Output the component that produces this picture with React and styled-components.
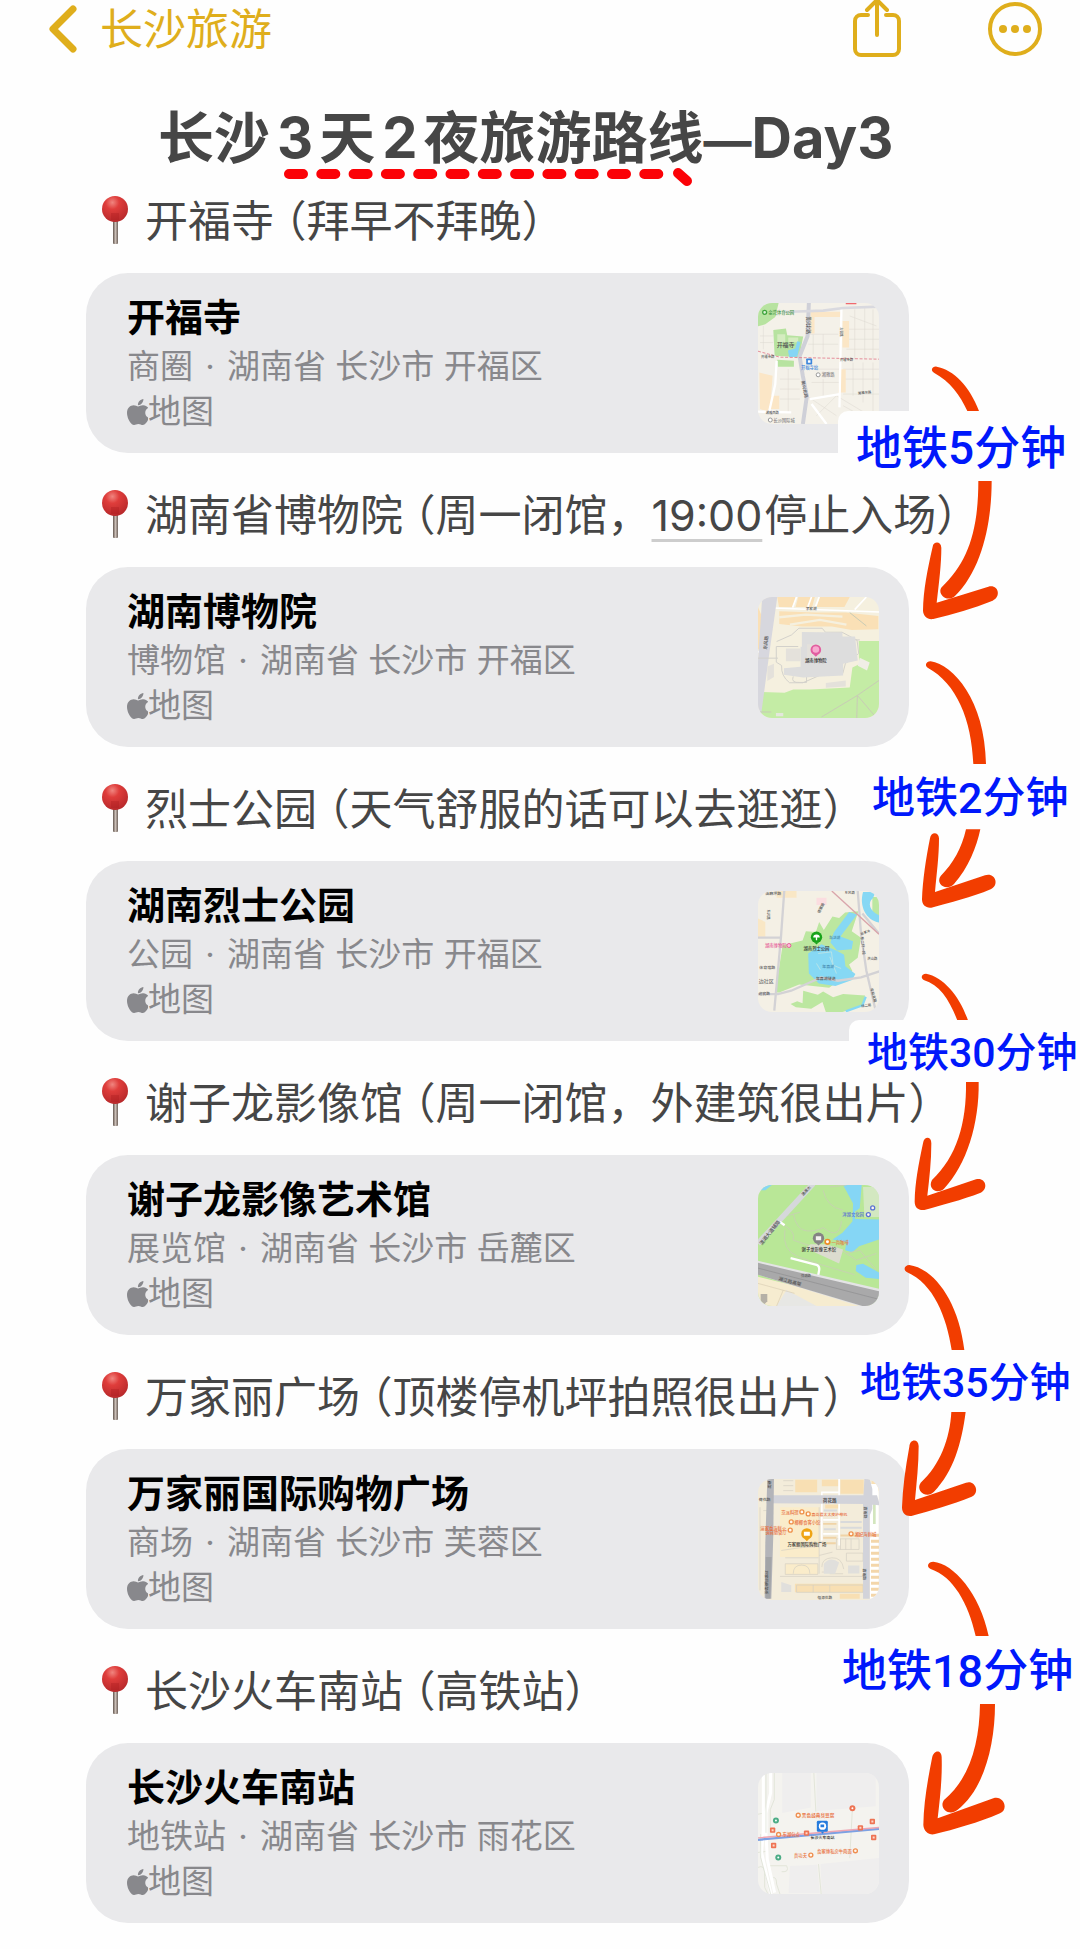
import React from "react";
import styled, { createGlobalStyle } from "styled-components";
import { FaApple } from "react-icons/fa";

const cjk = `"Noto Sans CJK SC", sans-serif`;
const accent = "#dfae1c";

const GlobalStyle = createGlobalStyle`
  *, *::before, *::after { box-sizing: border-box; }
  body { margin: 0; background: #fefefe; font-family: Inter, ${cjk}; color: #464646; overflow-x: hidden; }
  h1, h2, h3, p { margin: 0; font-weight: 400; }
  svg { display: block; flex: none; }
`;

const Page = styled.main`
  padding-bottom: 26px;
`;

const TopBar = styled.header`
  display: flex;
  align-items: center;
  height: 57px;
  padding: 0 37px 0 48px;
`;

const BarButton = styled.button`
  display: flex;
  align-items: center;
  gap: 22px;
  padding: 0;
  border: 0;
  background: none;
  color: ${accent};
  font: 400 43px/56px Inter, ${cjk};
  cursor: pointer;
`;

const Actions = styled.div`
  display: flex;
  align-items: center;
  gap: 86px;
  margin-left: auto;
`;

const TitleRow = styled.div`
  display: flex;
  padding: 41px 158px 13px;
`;

const Title = styled.h1`
  position: relative;
  font: 700 56px/80px Inter, ${cjk};
  white-space: nowrap;
`;

const Digit = styled.span`
  margin: 0 6px 0 7px;
`;

const Dash = styled.span`
  font-size: 48px;
  line-height: 1;
`;

const Underline = styled.svg`
  position: absolute;
  left: 121px;
  top: 67px;
`;

const Stops = styled.ol`
  display: flex;
  flex-direction: column;
  gap: 32px;
  margin: 0;
  padding: 0 171px 0 86px;
  list-style: none;
`;

const Stop = styled.li`
  display: flex;
  flex-direction: column;
  gap: 22px;
`;

const StopHeading = styled.h2`
  display: flex;
  align-items: center;
  gap: 16px;
  padding-left: 15px;
  font: 400 43px/60px Inter, ${cjk};
  white-space: nowrap;
`;

const OpenParen = styled.span`
  margin-left: 11px;
  font-feature-settings: "halt";
`;

const TimeLink = styled.a`
  padding: 0 2px 0 1px;
  color: inherit;
  text-decoration: underline #cdcdcd 3px;
  text-underline-offset: 8px;
`;

const CardWrap = styled.div`
  position: relative;
`;

const Card = styled.a`
  display: flex;
  align-items: center;
  justify-content: space-between;
  min-height: 180px;
  padding: 0 30px 0 41px;
  border-radius: 42px;
  background: #e9e9eb;
  color: #88888c;
  text-decoration: none;
`;

const CardTitle = styled.h3`
  margin-bottom: 6px;
  font: 700 38px/46px ${cjk};
  color: #000;
`;

const CardLine = styled.p`
  display: flex;
  align-items: center;
  font: 400 33px/45px Inter, ${cjk};
  white-space: pre;
`;

const Separator = styled.span`
  margin: 0 3px;
`;

const AppleMark = styled(FaApple)`
  width: 21px;
  height: 26px;
`;

const Thumb = styled.svg`
  width: 121px;
  height: 121px;
  border-radius: 14px;
`;

const Transit = styled.div`
  position: absolute;
  z-index: 1;
  right: -171px;
  top: ${(p) => p.$top}px;
  width: ${(p) => p.$width}px;
  pointer-events: none;
`;

const TransitLabel = styled.span`
  position: absolute;
  left: ${(p) => p.$left}px;
  top: ${(p) => p.$top}px;
  right: 0;
  height: ${(p) => p.$height}px;
  padding: 2px 0 0 18px;
  border-radius: 10px;
  background: #fefefe;
  color: #0018fb;
  font: 500 ${(p) => p.$size}px/${(p) => p.$height}px Roboto, ${cjk};
  white-space: nowrap;
`;

const BackIcon = () => (
  <svg width="30" height="50" viewBox="0 0 30 50" fill="none" stroke="currentColor" strokeWidth="7" strokeLinecap="round" strokeLinejoin="round" aria-hidden="true">
    <path d="M25 5 5 25l20 20" />
  </svg>
);

const ShareIcon = () => (
  <svg width="48" height="57" viewBox="0 0 48 57" fill="none" stroke="currentColor" strokeWidth="4" strokeLinecap="round" strokeLinejoin="round" aria-hidden="true">
    <path d="M15 15H8a6 6 0 0 0-6 6v28a6 6 0 0 0 6 6h32a6 6 0 0 0 6-6V21a6 6 0 0 0-6-6h-7M24 35V1M14 10 24 0l10 10" />
  </svg>
);

const MoreIcon = () => (
  <svg width="56" height="57" viewBox="0 0 56 57" aria-hidden="true">
    <circle cx="28" cy="29" r="25" fill="none" stroke="currentColor" strokeWidth="4" />
    <g fill="currentColor"><circle cx="16" cy="29" r="4" /><circle cx="28" cy="29" r="4" /><circle cx="40" cy="29" r="4" /></g>
  </svg>
);

const Pin = ({ id }) => (
  <svg width="28" height="52" viewBox="0 0 28 52" aria-hidden="true">
    <defs>
      <radialGradient id={"ball" + id} cx=".4" cy=".25" r=".75">
        <stop offset="0" stopColor="#f0857f" /><stop offset=".35" stopColor="#df3d3b" /><stop offset="1" stopColor="#b8292b" />
      </radialGradient>
      <linearGradient id={"rod" + id}>
        <stop offset="0" stopColor="#62564f" /><stop offset=".5" stopColor="#c9bdb5" /><stop offset="1" stopColor="#6e625c" />
      </linearGradient>
    </defs>
    <rect x="12" y="24" width="5" height="25" rx="1" fill={`url(#rod${id})`} />
    <circle cx="14" cy="14" r="13" fill={`url(#ball${id})`} />
    <path d="M10 18h8v7h-8z" fill="#a5181c" opacity=".3" />
  </svg>
);

const T = ({ x, y, s = 13, c = "#555", r = 0, a = "middle", w = 500, children }) => (
  <text x={x} y={y} fontSize={s} fill={c} textAnchor={a} fontWeight={w} fontFamily="Noto Sans CJK SC, sans-serif" transform={r ? `rotate(${r} ${x} ${y})` : undefined}>{children}</text>
);

const Dots = ({ items, r = 6 }) => items.map(([x, y, c]) => (
  <g key={x + "-" + y}><circle cx={x} cy={y} r={r} fill="#fff8ee" stroke={c} strokeWidth="4" /></g>
));

const TempleMap = () => (
  <Thumb viewBox="54 71 364 364" aria-hidden="true">
    <path fill="#f4f1e9" d="M54 71h364v364H54z" />
    <path stroke="#dcd9d1" strokeWidth="1.5" fill="none" d="M330 110l80 30M320 150h98M325 180h93M320 210h98M345 90v150M375 80v160M400 90v150M310 270h108M310 300h108M310 345h108M340 250v100M370 250v120M400 250v160M60 170h40M60 190h40M70 140v70M205 165h90M205 195h90M250 165v60M220 165v60M200 350l90 60M120 300h60M120 330h60M120 360h60M145 270v130M220 270h80M215 310h85M250 300v50M230 410l60-60 100 60M310 380l90 50" />
    <path fill="#fbe6c6" d="M212 97h92v16h-92zM308 125h20v80h-20zM300 270h18v70h-22zM58 280l40 10-8 110-30-10zM90 350h28v40H88zM212 113h12v50h-12z" />
    <path fill="#b7e3a0" d="M54 71h62l-10 42-30 22-22 6zM100 152l38-4 4 20 48 4-12 62-74-4zM112 242l50 3v18h-48z" />
    <path fill="#d5ecc0" d="M112 165h24v24h-24zM145 175h30v14h-30z" />
    <path fill="#86d5f5" d="M172 186l10 2-10 44-24 2-4-20 22-6z" />
    <path stroke="#fff" strokeWidth="7" fill="none" d="M110 245l-4 70-20 90M305 85l-6 300M54 398l100 2M215 375l45 60M210 360l90-15" />
    <path stroke="#cfd0d8" strokeWidth="12" fill="none" d="M207 71l-4 100-24 60 10 60 12 60-12 84" />
    <path stroke="#d9d9df" strokeWidth="8" fill="none" d="M130 98l120-4 60-8 108-4" />
    <path stroke="#e2798b" strokeWidth="2.5" strokeDasharray="9 5" fill="none" d="M54 216l66 18 298 6" />
    <path fill="#f0696e" d="M318 71h32v4h-32z" />
    <circle cx="74" cy="99" r="6" fill="#dff2d8" stroke="#3ea43b" strokeWidth="4" />
    <T x={85} y={104} a="start" c="#459446">金湾体育公园</T>
    <T x={137} y={204} s={18}>开福寺</T>
    <rect x="199" y="238" width="18" height="18" rx="2" fill="#3c86db" /><path d="M204 243h8v8h-8z" fill="#fff" />
    <T x={209} y={270} c="#3c86db">开福寺站</T>
    <T x={83} y={237} s={10}>开福寺路</T><T x={320} y={247} s={10}>开福寺路</T>
    <T x={202} y={112} s={13} r={90} a="start">黄兴北路</T><T x={184} y={306} s={13} r={78} a="start">黄兴北路</T>
    <T x={300} y={145} s={9} r={90} a="start">左湖路</T>
    <circle cx="235" cy="287" r="6" fill="#fff" stroke="#999" strokeWidth="3" /><T x={265} y={292} c="#888">湘雅路</T>
    <T x={375} y={344} s={10} r={-6}>湘雅东路</T><T x={97} y={404} s={10}>湘雅西路</T>
    <circle cx="91" cy="423" r="6" fill="#fff" stroke="#999" strokeWidth="3" /><T x={132} y={428} c="#888">长沙国际城</T>
  </Thumb>
);

const MuseumMap = () => (
  <Thumb viewBox="54 51 364 364" aria-hidden="true">
    <path fill="#f5f0df" d="M54 51h364v364H54z" />
    <path fill="#fae0b6" d="M112 51h55l-8 30h-42zM175 51h50l-8 30h-50zM240 51h90l-16 30h-84zM118 94l110 4 90 0 98 10v40l-80 2-60-10-90 0-68-8zM54 80l24 60-8 60-16 10z" />
    <path fill="none" stroke="#f5f0df" strokeWidth="7" d="M118 112l80-8 110 6M150 134l90-14 80 14" />
    <path fill="none" stroke="#fff" strokeWidth="5" d="M100 84l318 12M170 51l-12 32M215 51l-12 32M238 51l-12 32M380 51l-35 38M54 216l20 0" />
    <path fill="#c4eca5" d="M357 183h61v232H60l4-78 70 2 26-10 50 0 120-6 8-60 20-10z" />
    <path fill="#d7d7de" d="M66 60l10-9h36l-24 170-26 194h-8V245z" />
    <path fill="none" stroke="#d3d1cb" strokeWidth="3" d="M110 185l45-20 22-20h70l10 12 50 0 45 24 5 40-40 30-8 30-70 6-50 22h-40q-26-20-24-52l-16-10V200h66M160 290q-8 20 20 18h20v-20M300 180l60 0M54 235h60" />
    <path fill="#dddddd" d="M186 156l122 2v12h38l8 72-44 10v35l-120 6-58-8v-20l50-4v-60h4z" />
    <path fill="#e4e1db" d="M138 206h44v38h-44zM202 193h40v45h-40zM82 260l20-8v40l-20 12zM258 310l60-8v18l-60 4z" />
    <path fill="#f0eee6" d="M360 234l30 14-8 24-28-14z" />
    <path fill="none" stroke="#c8cbb6" strokeWidth="3" d="M245 412l108-65 65-45M353 347l-2 68M353 347l55 65M330 98l50 40M54 397h40" />
    <circle cx="228" cy="210" r="16" fill="#e25ea0" /><path d="M221 224l7 7 7-7z" fill="#e25ea0" /><circle cx="228" cy="209" r="10" fill="#f8a9cf" />
    <T x={228} y={248} s={13} c="#222">湖南博物院</T><T x={214} y={91} s={11}>李家湖</T><T x={80} y={210} s={14} r={-83} a="start">东风路</T>
    <path fill="#e4e7dc" d="M108 400h22v10h-22z" />
  </Thumb>
);

const ParkMap = () => (
  <Thumb viewBox="54 92 364 364" aria-hidden="true">
    <path fill="#f4f0e5" d="M54 92h364v364H54z" />
    <path fill="#fbe2b8" d="M54 175l22 10v45H54zM110 92h60v20h-60z" opacity=".7" />
    <path fill="#fbdde0" d="M230 112h30v22h-30z" />
    <path fill="#bce7a0" d="M128 255l60-14 10-28 30 2 10-30 14 24 26-40 20 4 18-16 40-4-20 60 28 20-10 60-26 20 10 20-70 50-90-10-60 24h-12zM190 392l44 12 16-10 30 18 30-10 66 4-8 32-60 18h-50l-10-30-34 20-46-4-16-10 20-8 16 6zM398 110l20 0v60l-20-10z" />
    <path fill="#86d8f4" d="M370 95h38l-8 18c-18 14-10 40 18 52v22c-40-8-60-50-48-92zM328 155l24 8-50 66 38 14-4 24-44 4-20-24 10-30zM205 280l40-28 46 20 22 12 4 34 30 24-10 18-50 18-50-8-30-30z" />
    <path fill="none" stroke="#86d8f4" strokeWidth="7" d="M378 410l-10 26-50 18" />
    <path fill="none" stroke="#d3d2d5" strokeWidth="7" d="M133 92l-10 140-20 220M54 232h70M54 402h60l40-10 90-40 50 10 70-10 60-20M354 92l10 130 16 110 28 120M418 220l-50-60" />
    <path fill="none" stroke="#d9a5ab" strokeWidth="4" d="M276 92l142 130" />
    <path fill="none" stroke="#b7e3e8" strokeWidth="3" d="M235 280l40-5 5 40 24 10M230 310l12 20M270 290l20 50" />
    <circle cx="230" cy="231" r="17" fill="#18a31b" /><path d="M223 246l7 7 7-7z" fill="#18a31b" /><path d="M220 232a10 9 0 0 1 20 0h-8v8h-4v-8z" fill="#fff" />
    <T x={230} y={270} c="#333">湖南烈士公园</T>
    <T x={75} y={262} a="start" c="#e65c98">湖南博物院</T><circle cx="147" cy="256" r="6" fill="#fbd" stroke="#e65c98" strokeWidth="3" />
    <T x={100} y={105} s={12}>油麻坪路</T><T x={330} y={101} s={10}>东风路</T><T x={80} y={148} s={10} r={90} a="start">东风路</T><T x={240} y={160} s={11} r={-65} a="start">德雅路</T>
    <T x={82} y={328} s={12}>体育馆路</T><T x={79} y={370} s={15} c="#777">边社区</T><T x={73} y={406} s={11}>迎宾路</T>
    <T x={363} y={230} s={11} r={84} a="start">东二环一段</T><T x={392} y={385} s={11} r={75} a="start">车站北路</T><T x={258} y={361} s={12}>年嘉湖隧道</T><T x={265} y={323} s={12} c="#478cb0">年嘉湖</T><T x={285} y={235} s={11} c="#478cb0">跃进湖</T><T x={398} y={299} s={10}>洪山路</T><T x={378} y={220} s={10} r={-20}>丝茅冲</T><T x={380} y={440} s={10} r={-10}>纬二路</T>
  </Thumb>
);

const ArtMap = () => (
  <Thumb viewBox="114 74 364 364" aria-hidden="true">
    <path fill="#b9e797" d="M114 74h364v364H114z" />
    <path fill="#85d6f5" d="M370 74h56l-6 70-14 10 0 22 72 2v60l-60 20-20 18-22-6 4-24-42-8 30-20 30-34 2-54zM122 90l14-16h20l-20 16zM410 315l20-4 48 26v20l-40-4-30-20z" />
    <path fill="#e4e9de" d="M430 80h48v90h-44z" opacity=".6" />
    <path fill="none" stroke="#c6d3b0" strokeWidth="3" d="M180 190q50 20 40 50l60 20M220 160q10 50 40 52t50-10q50 40 55-20 M310 90q10 50 60 60M195 210q-10 60 40 80l70 24 100 30M350 260l60 40 60-20M190 170l50-14M330 80l50-6M380 280l40-10 50 60" />
    <path fill="none" stroke="#d6d8db" strokeWidth="17" d="M114 250L280 70" />
    <path fill="none" stroke="#fff" strokeWidth="7" d="M180 185l14 10M212 294l78 20q10 4 8 16l-4 22" />
    <path fill="#dcdccf" d="M272 252h46l52 16-12 42-100-46z" />
    <path fill="#f6ecd0" d="M114 350l364 88H114z" /><path fill="#e7e7e4" d="M200 390l90 48H170z" /><path fill="#b5b0a6" d="M122 402h20v22l-10 10-10-6z" /><path stroke="#dacdb3" strokeWidth="2" fill="none" d="M114 370l110 30M190 390l-20 48" />
    <path fill="#e4e4e5" d="M114 302l364 84v52h-60L114 344z" />
    <path fill="#a9a9aa" d="M114 308l364 86v44h-50L114 344z" /><path stroke="#8e8e90" strokeWidth="2" fill="none" d="M114 324l364 94" />
    <circle cx="296" cy="234" r="17" fill="#858384" /><path d="M289 249l7 7 7-7z" fill="#858384" /><path d="M288 228h16v12h-16z" fill="#f4f1ef" />
    <T x={297} y={272} c="#333">谢子龙影像艺术馆</T>
    <circle cx="323" cy="245" r="7" fill="#fff" stroke="#ef8d28" strokeWidth="5" /><T x={335} y={251} a="start" c="#e3763d">一尚咖啡</T>
    <T x={400} y={167} c="#5b73d3">洋湖文化园</T><Dots items={[[446, 163, "#5b73d3"], [459, 143, "#5b73d3"]]} />
    <T x={126} y={256} s={15} r={-52} a="start">潇湘大道辅路</T><T x={250} y={108} s={12} r={-48} a="start">潇湘大</T><T x={175} y={360} s={14} r={15} a="start">湘江路高架</T><T x={258} y={350} s={10}>洋湖路</T>
  </Thumb>
);

const MallMap = () => (
  <Thumb viewBox="114 115 364 364" aria-hidden="true">
    <path fill="#f3ecda" d="M114 115h364v364H114z" />
    <path fill="#f8dfb3" d="M226 117h66v38h-66zM306 117h50v20h-50zM362 117h70v42h-70zM456 120h22v30h-22zM225 430h205v26H225zM360 460h60v15h-60zM316 192h40v12h-40z" />
    <path fill="#faecca" d="M180 200h118v150H180zM196 370h98v32h-98z" />
    <g stroke="#d3cfc2" strokeWidth="2" fill="none"><path d="M190 120h30M190 135h30M190 150h30M184 330l54-8 60-4M196 352h100M196 370h98v32h-98zM220 400q0-26 25-26t25 26M298 200v200M350 295h68v32h-68zM362 295v32M378 295v32M394 295v32M380 338h50v24h-50zM298 345l40-10M230 434h200v22H230zM280 434v22M330 434v22M180 408h250M120 200v250M130 210h20" /><path d="M306 380q0-26 30-28t36 34M306 395h20M330 400h40" /></g>
    <path fill="#e0dfdc" d="M312 370q20-24 46-4l-12 34h-34zM385 375h34v24h-34zM184 425l30 10v20h-30z" />
    <path stroke="#fff" strokeWidth="5" fill="none" d="M306 155V300M358 115v200M310 238h50M310 280h50M304 155h55" />
    <path stroke="#f0d3a6" strokeWidth="6" fill="none" d="M310 250h40M310 292h40M310 308h38M362 285h60" /><path stroke="#d9dadb" strokeWidth="6" fill="none" d="M362 244h64M362 262h64M312 210h40M312 266h36" />
    <path stroke="#fff" strokeWidth="26" fill="none" d="M464 130v345" /><path stroke="#f3d6aa" strokeWidth="24" strokeDasharray="9 9" fill="none" d="M466 280v195" /><path stroke="#d3e6bd" strokeWidth="8" fill="none" d="M464 190v60" />
    <path fill="#d2d3da" d="M150 164h322l6 20v10l-40-4-300-2zM434 115h16l8 30v60l-8 20v250h-20V190z" />
    <path fill="#b3b4b9" d="M142 115h20l-2 170-6 190h-20l2-170z" /><path fill="#8f9093" d="M137 350h18l-4 125h-14z" opacity=".45" />
    <T x={330} y={185} s={14} w={700}>荷花路</T><T x={134} y={181} s={12}>荷花路</T>
    <T x={210} y={219} c="#e76f3d">京派料理</T><T x={275} y={226} s={12} a="start" c="#e76f3d">嘉尚君太太皮护神机</T><T x={224} y={249} a="start" c="#e76f3d">椰椰食客小馆</T><T x={160} y={267} c="#e76f3d">渝家香海鲜火</T><T x={168} y={281} c="#e76f3d">锅自助餐厅</T><T x={405} y={285} a="start" c="#e76f3d">湘妃海鲜城</T>
    <Dots items={[[246, 214, "#ef914b"], [265, 220, "#ef914b"], [214, 244, "#ef914b"], [211, 269, "#ef914b"], [394, 280, "#ef914b"]]} />
    <circle cx="261" cy="280" r="17" fill="#efa414" /><path d="M254 295l7 7 7-7z" fill="#efa414" /><path d="M252 274h18v12h-18z" fill="#fff" />
    <T x={261} y={318} c="#333" s={13}>万家丽国际购物广场</T><T x={434} y={198} s={12} r={90} a="start">嘉雨路</T><T x={430} y={384} s={12} r={90} a="start">嘉雨路</T><T x={144} y={120} s={12} r={90} a="start">高架</T><T x={134} y={390} s={12} r={90} a="start">万家丽高架桥</T><T x={315} y={475} s={11}>恒源花路</T>
  </Thumb>
);

const StationMap = () => (
  <Thumb viewBox="114 156 364 364" aria-hidden="true">
    <path fill="#f4f3ef" d="M114 156h364v364H114z" />
    <path fill="#efeeee" d="M187 156h86v104l-86 16zM290 156h178v100l-178 14zM210 436l82-4 8 86h-94zM302 430l176-18v108H306z" />
    <path fill="none" stroke="#e2e5d9" strokeWidth="3" d="M282 156l6 116M163 156v80l-12 30v70M398 262l-8 150M114 440q20-10 20 20v40l10 20M160 470q10 0 10 20l10 30M145 435l55 0q10 20-15 18M296 430l8 90M114 280l24-5M114 395l30-4" />
    <path fill="none" stroke="#fff" strokeWidth="9" d="M130 156v170l-5 70 28 124M152 156v60l-14 60v60l4 80 22 100" />
    <path fill="none" stroke="#d8dccf" strokeWidth="2" d="M138 156v180M122 340v70l30 110" />
    <path fill="none" stroke="#7da1e3" strokeWidth="7" d="M114 357l364-33" /><path fill="none" stroke="#efa5b2" strokeWidth="4" d="M114 351l364-31" />
    <rect x="291" y="300" width="33" height="33" rx="4" fill="#267bdd" /><path d="M303 333l5 6 5-6z" fill="#267bdd" /><circle cx="308" cy="316" r="11" fill="#fff" /><path d="M302 311h11v8h-11z" fill="#267bdd" />
    <T x={308} y={356} s={12} c="#222">长沙火车南站</T>
    <T x={246} y={289} a="start" c="#e9713c" s={14}>黑色经典臭豆腐</T><T x={188} y={346} a="start" c="#e9713c">东湖包点</T><T x={242} y={409} c="#e9713c">真功夫</T><T x={344} y={396} s={13} c="#e9713c">詹家傳私房牛肉面</T>
    <Dots items={[[235, 283, "#ef8e4f"], [176, 341, "#ef8e4f"], [273, 403, "#ef8e4f"], [407, 390, "#ef8e4f"]]} />
    <g fill="#ee7353">{[[158, 328], [161, 374], [458, 302], [462, 350], [422, 321], [260, 337]].map(([x, y]) => <g key={x}><rect x={x - 8} y={y - 8} width="16" height="16" rx="3" /><path d={`M${x - 3} ${y - 3}h6v6h-6z`} fill="#fcd9cb" /></g>)}<circle cx="398" cy="262" r="9" /></g>
    <g fill="#4cac86"><circle cx="168" cy="299" r="9" /><circle cx="175" cy="410" r="9" /></g><g fill="#fff"><circle cx="168" cy="299" r="3" /><circle cx="175" cy="410" r="3" /><circle cx="398" cy="262" r="3" /></g>
  </Thumb>
);

const stops = [
  {
    place: "开福寺", note: <>拜早不拜晚）</>, name: "开福寺", kind: "商圈", area: "湖南省 长沙市 开福区", Map: TempleMap,
    transit: {
      label: "地铁5分钟", top: 7, width: 340, height: 360, left: 98, labelTop: 131, labelHeight: 70, size: 46,
      paths: ["M590 260C640 268 690 320 717 393H682C660 345 630 305 583 279C570 272 576 258 590 260Z", "M715 603H755C755 730 725 870 645 948C620 970 590 940 605 922C680 850 715 760 715 603Z", "M578 800C580 784 603 782 604 803C604 850 598 900 590 968L745 920C775 912 785 950 758 962C700 985 640 1003 580 1017C562 1020 550 1008 549 992C550 930 562 870 578 800Z"],
    },
  },
  {
    place: "湖南省博物院", note: <>周一闭馆，<TimeLink href="#time">19:00</TimeLink>停止入场）</>, name: "湖南博物院", kind: "博物馆", area: "湖南省 长沙市 开福区", Map: MuseumMap,
    transit: {
      label: "地铁2分钟", top: 13, width: 340, height: 360, left: 114, labelTop: 184, labelHeight: 65, size: 43,
      paths: ["M572 244C640 255 735 360 738 553H700C695 420 650 310 563 263C552 255 560 244 572 244Z", "M678 748H721C710 800 685 865 642 912C620 935 585 912 602 888C640 850 665 805 678 748Z", "M570 775C572 755 596 754 597 775C597 830 590 880 585 936L735 886C765 876 780 915 752 928C695 952 630 968 574 983C558 985 546 975 546 958C548 900 558 835 570 775Z"],
    },
  },
  {
    place: "烈士公园", note: <>天气舒服的话可以去逛逛）</>, name: "湖南烈士公园", kind: "公园", area: "湖南省 长沙市 开福区", Map: ParkMap,
    transit: {
      label: "地铁30分钟", top: -1, width: 340, height: 360, left: 109, labelTop: 160, labelHeight: 62, size: 41,
      paths: ["M558 341C610 350 660 410 684 481H652C628 420 600 375 551 360C540 352 546 341 558 341Z", "M678 666H716C718 790 680 915 612 986C590 1005 562 985 576 960C650 890 680 790 678 666Z", "M549 850C552 828 574 828 574 850C574 905 568 955 562 1007L708 958C735 950 748 985 722 998C665 1020 605 1035 553 1050C535 1052 524 1042 524 1025C525 970 535 915 549 850Z"],
    },
  },
  {
    place: "谢子龙影像馆", note: <>周一闭馆，外建筑很出片）</>, name: "谢子龙影像艺术馆", kind: "展览馆", area: "湖南省 长沙市 岳麓区", Map: ArtMap,
    transit: {
      label: "地铁35分钟", top: 5, width: 360, height: 380, left: 122, labelTop: 190, labelHeight: 62, size: 41,
      paths: ["M568 315C640 325 715 420 733 570H695C680 470 640 370 560 336C548 328 555 315 568 315Z", "M694 755H737C725 850 700 935 642 995C620 1018 585 992 602 968C660 915 690 835 694 755Z", "M568 860C570 836 595 836 596 858C596 915 590 965 585 1020L738 968C765 958 782 998 755 1010C695 1035 630 1052 574 1068C558 1070 546 1060 546 1042C548 985 556 925 568 860Z"],
    },
  },
  {
    place: "万家丽广场", note: <>顶楼停机坪拍照很出片）</>, name: "万家丽国际购物广场", kind: "商场", area: "湖南省 长沙市 芙蓉区", Map: MallMap,
    transit: {
      label: "地铁18分钟", top: -9, width: 360, height: 420, left: 104, labelTop: 196, labelHeight: 68, size: 45,
      paths: ["M640 365C700 370 780 460 806 588H767C745 490 700 410 632 387C618 380 624 365 640 365Z", "M780 792H825C825 920 790 1050 712 1110C688 1130 655 1105 672 1080C750 1015 778 910 780 792Z", "M636 955C640 928 665 928 665 952C667 1015 660 1075 653 1135L820 1075C850 1065 868 1108 840 1120C775 1148 705 1168 642 1183C625 1185 611 1173 610 1155C611 1090 622 1025 636 955Z"],
    },
  },
  { place: "长沙火车南站", note: <>高铁站）</>, name: "长沙火车南站", kind: "地铁站", area: "湖南省 长沙市 雨花区", Map: StationMap },
];

const TransitLeg = ({ leg }) => (
  <Transit $top={leg.top} $width={leg.width}>
    <svg width={leg.width} height={leg.height} viewBox={`0 0 ${leg.width * 3} ${leg.height * 3}`} fill="#f23d00" aria-hidden="true">
      {leg.paths.map((d) => <path key={d} d={d} />)}
    </svg>
    <TransitLabel $left={leg.left} $top={leg.labelTop} $height={leg.labelHeight} $size={leg.size}>{leg.label}</TransitLabel>
  </Transit>
);

export default function App() {
  return (
    <Page>
      <GlobalStyle />
      <TopBar>
        <BarButton type="button"><BackIcon />长沙旅游</BarButton>
        <Actions>
          <BarButton type="button" aria-label="分享"><ShareIcon /></BarButton>
          <BarButton type="button" aria-label="更多"><MoreIcon /></BarButton>
        </Actions>
      </TopBar>
      <TitleRow>
        <Title>
          长沙<Digit>3</Digit>天<Digit>2</Digit>夜旅游路线<Dash>—</Dash>Day3
          <Underline width="420" height="24" viewBox="0 0 420 24" fill="none" stroke="#fb0207" strokeWidth="10" strokeLinecap="round" aria-hidden="true">
            <path d="M10 9H380" strokeDasharray="14 18.300" />
            <path d="M399 8l9 8" />
          </Underline>
        </Title>
      </TitleRow>
      <Stops>
        {stops.map(({ place, note, name, kind, area, Map, transit }, i) => (
          <Stop key={place}>
            <StopHeading>
              <Pin id={i} />
              <span>{place}<OpenParen>（</OpenParen>{note}</span>
            </StopHeading>
            <CardWrap>
              <Card href={"#stop-" + (i + 1)}>
                <div>
                  <CardTitle>{name}</CardTitle>
                  <CardLine>{kind}<Separator> · </Separator>{area}</CardLine>
                  <CardLine><AppleMark viewBox="4 32 360 448" preserveAspectRatio="xMinYMid meet" aria-hidden="true" />地图</CardLine>
                </div>
                <Map />
              </Card>
              {transit && <TransitLeg leg={transit} />}
            </CardWrap>
          </Stop>
        ))}
      </Stops>
    </Page>
  );
}
